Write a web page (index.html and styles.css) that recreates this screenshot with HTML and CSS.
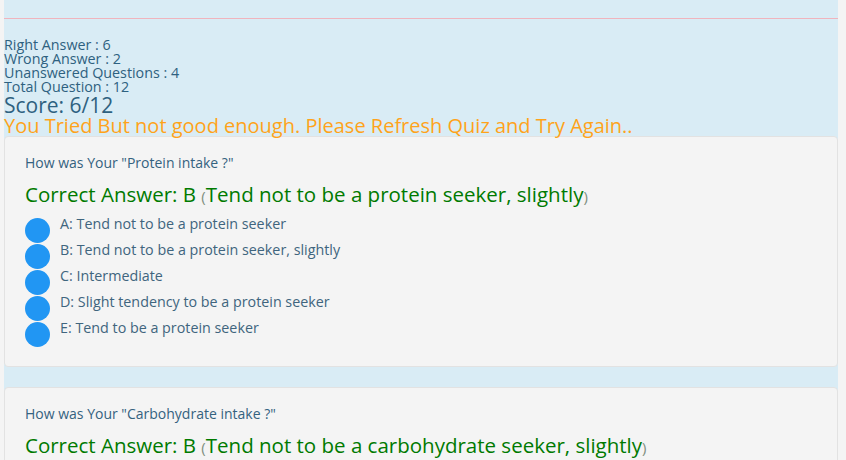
FILE: index.html
```html
<!DOCTYPE html>
<html>
<head>
<meta charset="utf-8">
<link rel="stylesheet" href="styles.css">
</head>
<body>
<div class="wrap">
  <hr class="rule">
  <div class="summary">
    <div class="stat">Right Answer : 6</div>
    <div class="stat">Wrong Answer : 2</div>
    <div class="stat">Unanswered Questions : 4</div>
    <div class="stat">Total Question : 12</div>
    <div class="score">Score: 6/12</div>
    <div class="verdict">You Tried But not good enough. Please Refresh Quiz and Try Again..</div>
  </div>
  <div class="card">
    <div class="question">How was Your "Protein intake ?"</div>
    <div class="correct">Correct Answer: B <span class="paren">(</span>Tend not to be a protein seeker, slightly<span class="paren">)</span></div>
    <ul class="options">
      <li><span class="dot"></span><span class="opt">A: Tend not to be a protein seeker</span></li>
      <li><span class="dot"></span><span class="opt">B: Tend not to be a protein seeker, slightly</span></li>
      <li><span class="dot"></span><span class="opt">C: Intermediate</span></li>
      <li><span class="dot"></span><span class="opt">D: Slight tendency to be a protein seeker</span></li>
      <li><span class="dot"></span><span class="opt">E: Tend to be a protein seeker</span></li>
    </ul>
  </div>
  <div class="card">
    <div class="question">How was Your "Carbohydrate intake ?"</div>
    <div class="correct">Correct Answer: B <span class="paren">(</span>Tend not to be a carbohydrate seeker, slightly<span class="paren">)</span></div>
    <ul class="options">
      <li><span class="dot"></span><span class="opt">A: Tend not to be a carbohydrate seeker</span></li>
      <li><span class="dot"></span><span class="opt">B: Tend not to be a carbohydrate seeker, slightly</span></li>
      <li><span class="dot"></span><span class="opt">C: Intermediate</span></li>
    </ul>
  </div>
</div>
</body>
</html>
```
FILE: styles.css
```css
html, body {
  margin: 0;
  padding: 0;
}
body {
  background: #f4f4f4;
  font-family: "Open Sans", "DejaVu Sans", sans-serif;
  overflow: hidden;
  height: 460px;
}
.wrap {
  margin-left: 4px;
  width: 834px;
  background: #d9ecf5;
  padding-top: 18px;
  min-height: 460px;
}
.rule {
  margin: 0;
  border: 0;
  border-top: 1px solid #f0b4bd;
}
.summary {
  padding-top: 19px;
  color: #2e6180;
}
.stat {
  font-size: 14.3px;
  line-height: 14px;
}
.score {
  font-size: 21px;
  line-height: 19px;
  color: #2e6180;
  margin-top: 2px;
}
.verdict {
  font-size: 20px;
  line-height: 21px;
  color: #ffa31a;
}
.card {
  background: #f4f4f4;
  border: 1px solid #e2e2e2;
  border-radius: 4px;
  padding: 17px 20px 24px;
  margin-bottom: 20px;
}
.question {
  font-size: 14px;
  color: #34627f;
  line-height: 18px;
}
.correct {
  margin-top: 11px;
  font-size: 20.5px;
  line-height: 23px;
  color: #007a00;
}
.paren {
  font-size: 15px;
  color: #7f8f7f;
}
.options {
  list-style: none;
  margin: 4px 0 0;
  padding: 0;
}
.options li {
  display: flex;
  align-items: flex-start;
  height: 26px;
}
.dot {
  width: 25px;
  height: 25px;
  border-radius: 50%;
  background: #2196f3;
  margin-top: 6px;
  flex: none;
}
.opt {
  margin-left: 10px;
  padding-top: 2px;
  font-size: 14.3px;
  line-height: 20px;
  color: #40657e;
}
```
